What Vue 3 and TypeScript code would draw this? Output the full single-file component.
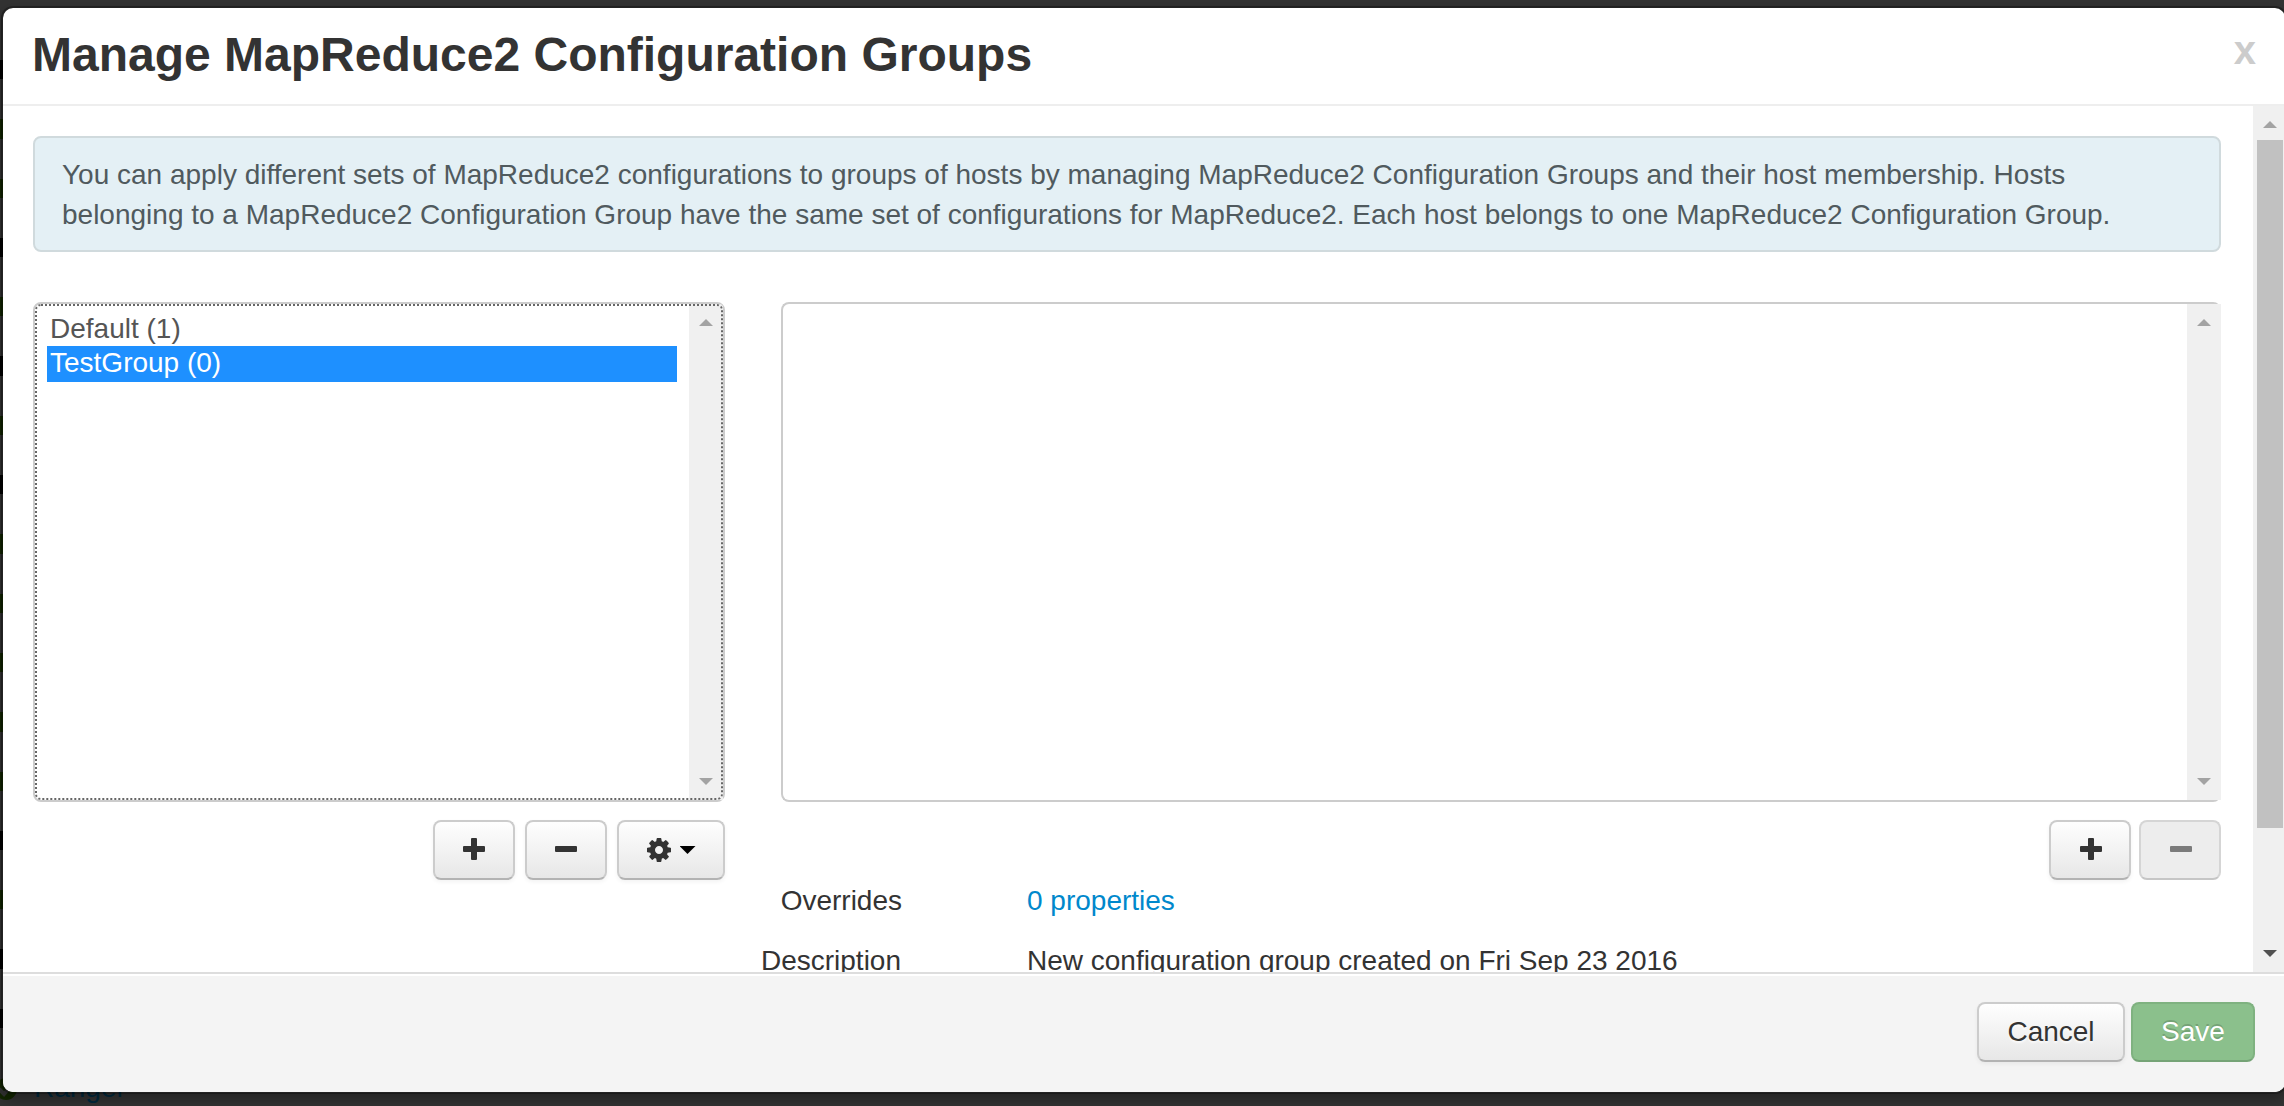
<script setup lang="ts">
import { ref } from 'vue'

interface ConfigGroup {
  name: string
  hosts: number
}

const service = 'MapReduce2'
const groups: ConfigGroup[] = [
  { name: 'Default', hosts: 1 },
  { name: 'TestGroup', hosts: 0 },
]
const selected = ref('TestGroup')

// Service statuses of the page behind the dialog, one per 60px row
const statuses: string[] = [
  'client', 'ok', 'ok', 'client', 'ok', 'client', 'ok', 'client', 'ok',
  'ok', 'ok', 'ok', 'ok', 'client', 'ok', 'client', 'client',
]
</script>

<template>
  <div class="screen">
    <div class="page">
      <div class="edge">
        <i v-for="(s, n) in statuses" :key="n" :class="s"></i>
      </div>
      <div class="entry">
        <span class="status">
          <svg width="22" height="22" viewBox="0 0 22 22">
            <circle cx="11" cy="11" r="11" fill="#122600" />
            <path d="M4 11l5 5 9-10" fill="none" stroke="#333" stroke-width="4" />
          </svg>
        </span>
        <span class="service">Ranger</span>
      </div>
    </div>

    <div class="modal">
      <header class="head">
        <h3>Manage {{ service }} Configuration Groups</h3>
        <span class="close">x</span>
      </header>

      <div class="body">
        <div class="content">
          <div class="alert">
            You can apply different sets of {{ service }} configurations to groups of hosts by managing {{ service }} Configuration Groups and their host membership. Hosts<br />
            belonging to a {{ service }} Configuration Group have the same set of configurations for {{ service }}. Each host belongs to one {{ service }} Configuration Group.
          </div>

          <div class="columns">
            <section class="left">
              <div class="list focused">
                <div class="options">
                  <div
                    v-for="g in groups"
                    :key="g.name"
                    class="option"
                    :class="{ active: g.name === selected }"
                    @click="selected = g.name"
                  >{{ g.name }} ({{ g.hosts }})</div>
                </div>
                <div class="bar">
                  <i class="up"></i>
                  <i class="down"></i>
                </div>
              </div>
              <div class="actions">
                <button class="btn icon">
                  <svg width="22" height="22"><path d="M9 0h4q1 0 1 1v7h7q1 0 1 1v4q0 1-1 1h-7v7q0 1-1 1h-4q-1 0-1-1v-7h-7q-1 0-1-1v-4q0-1 1-1h7v-7q0-1 1-1z" fill="#333" /></svg>
                </button>
                <button class="btn icon">
                  <svg width="22" height="22"><rect y="8" width="22" height="6" rx="1" fill="#333" /></svg>
                </button>
                <button class="btn gear">
                  <svg width="24" height="24" viewBox="128 128 1536 1536"><path fill="#333" d="M1152 896q0-106-75-181t-181-75-181 75-75 181 75 181 181 75 181-75 75-181zm512-109v222q0 12-8 23t-20 13l-185 28q-19 54-39 91 35 50 107 138 10 12 10 25t-9 23q-27 37-99 108t-94 71q-12 0-26-9l-138-108q-44 23-91 38-16 136-29 186-7 28-36 28h-222q-14 0-24.500-8.500t-11.500-21.500l-28-184q-49-16-90-37l-141 107q-10 9-25 9-14 0-25-11-126-114-165-168-7-10-7-23 0-12 8-23 15-21 51-66.500t54-70.500q-27-50-41-99l-183-27q-13-2-21-12.500t-8-23.500v-222q0-12 8-23t19-13l186-28q14-46 39-92-40-57-107-138-10-12-10-24 0-10 9-23 26-36 98.500-107.500t94.500-71.500q13 0 26 10l138 107q44-23 91-38 16-136 29-186 7-28 36-28h222q14 0 24.500 8.500t11.500 21.500l28 184q49 16 90 37l142-107q9-9 24-9 13 0 25 10 129 119 165 170 7 8 7 22 0 12-8 23-15 21-51 66.500t-54 70.500q26 50 41 98l183 28q13 2 21 12.500t8 23.500z" /></svg>
                  <i class="caret"></i>
                </button>
              </div>
            </section>

            <section class="right">
              <div class="list hosts">
                <div class="options"></div>
                <div class="bar">
                  <i class="up"></i>
                  <i class="down"></i>
                </div>
              </div>
              <div class="actions tight">
                <button class="btn icon">
                  <svg width="22" height="22"><path d="M9 0h4q1 0 1 1v7h7q1 0 1 1v4q0 1-1 1h-7v7q0 1-1 1h-4q-1 0-1-1v-7h-7q-1 0-1-1v-4q0-1 1-1h7v-7q0-1 1-1z" fill="#333" /></svg>
                </button>
                <button class="btn icon disabled" disabled>
                  <svg width="22" height="22"><rect y="8" width="22" height="6" rx="1" fill="#7b7b7b" /></svg>
                </button>
              </div>
              <dl class="details">
                <div class="row">
                  <dt class="first">Overrides</dt>
                  <dd><a>0 properties</a></dd>
                </div>
                <div class="row">
                  <dt>Description</dt>
                  <dd>New configuration group created on Fri Sep 23 2016</dd>
                </div>
              </dl>
            </section>
          </div>
        </div>

        <div class="scroll">
          <i class="up"></i>
          <div class="thumb"></div>
          <i class="down dark"></i>
        </div>
      </div>

      <footer class="foot">
        <button class="btn cancel">Cancel</button>
        <button class="btn save" disabled>Save</button>
      </footer>
    </div>
  </div>
</template>

<style>
body {
  margin: 0;
  background: #333;
}
</style>

<style scoped>
* {
  box-sizing: border-box;
}
.screen {
  position: relative;
  width: 2284px;
  height: 1106px;
  overflow: hidden;
  background: #333;
  padding: 6px 0 0 1px;
  font-family: 'Liberation Sans', Arial, sans-serif;
  font-size: 28px;
  line-height: 40px;
  color: #333;
}
.page {
  position: absolute;
  left: 0;
  top: 0;
}
.edge {
  display: flex;
  flex-direction: column;
  width: 3px;
  height: 1068px;
  padding-top: 60px;
}
.edge i {
  height: 20px;
  margin-bottom: 40px;
}
.edge .client {
  background: #000;
}
.edge .ok {
  background: #122600;
}
.entry {
  display: flex;
  margin-left: -5px;
}
.status {
  width: 39px;
  padding-top: 10px;
  line-height: 0;
}
.service {
  color: #00293d;
}
.modal {
  position: relative;
  display: flex;
  flex-direction: column;
  width: 2286px;
  height: 1088px;
  background: #fff;
  background-clip: padding-box;
  border: 2px solid rgba(0, 0, 0, 0.3);
  border-radius: 12px;
  box-shadow: 0 6px 14px rgba(0, 0, 0, 0.3);
  overflow: hidden;
}
.head {
  flex: none;
  display: flex;
  justify-content: space-between;
  height: 98px;
  padding: 17px 29px 0 29px;
  border-bottom: 2px solid #eee;
}
h3 {
  margin: 0;
  font-size: 48px;
  line-height: 60px;
  font-weight: bold;
  white-space: nowrap;
}
.close {
  margin-top: 5px;
  font-size: 40px;
  line-height: 40px;
  font-weight: bold;
  color: #ccc;
}
.body {
  flex: none;
  display: flex;
  height: 866px;
  overflow: hidden;
}
.content {
  width: 2250px;
  padding: 30px 32px 0 30px;
}
.alert {
  height: 116px;
  padding: 17px 27px;
  border: 2px solid #d0dadd;
  border-radius: 8px;
  background: #e4f0f5;
  color: #505a5e;
  white-space: nowrap;
}
.columns {
  display: flex;
  gap: 56px;
  margin-top: 50px;
}
.left {
  width: 692px;
}
.right {
  width: 1440px;
}
.list {
  display: flex;
  height: 500px;
  border: 2px solid #ccc;
  border-radius: 8px;
  color: #555;
}
.focused {
  outline: 2px dotted #666;
  outline-offset: -4px;
}
.focused .bar {
  border-top-right-radius: 4px;
}
.hosts {
  border-right: 0;
}
.options {
  flex: 1;
  padding: 8px 12px;
}
.option {
  height: 34px;
  line-height: 33px;
  padding-left: 3px;
}
.option.active {
  height: 36px;
  background: #1e90ff;
  color: #fff;
}
.bar {
  display: flex;
  flex-direction: column;
  justify-content: space-between;
  align-items: center;
  width: 34px;
  padding: 15px 0;
  background: #f0f0f0;
}
.up,
.down {
  width: 14px;
  height: 7px;
  background: #a3a3a3;
}
.up {
  clip-path: polygon(50% 0, 100% 100%, 0 100%);
}
.down {
  clip-path: polygon(0 0, 100% 0, 50% 100%);
}
.dark {
  background: #505050;
}
.actions {
  display: flex;
  justify-content: flex-end;
  gap: 10px;
  margin-top: 18px;
}
.tight {
  gap: 8px;
}
.btn {
  display: flex;
  align-items: center;
  justify-content: center;
  height: 60px;
  padding: 0;
  border: 2px solid #ccc;
  border-bottom-color: #b3b3b3;
  border-radius: 8px;
  background: linear-gradient(#fff, #e6e6e6) border-box;
  box-shadow: 0 2px 4px rgba(0, 0, 0, 0.05);
  font: inherit;
  color: #333;
  text-shadow: 0 2px 2px rgba(255, 255, 255, 0.75);
}
.icon {
  width: 82px;
}
.icon svg {
  margin-top: -2px;
}
.tight .icon {
  padding-left: 2px;
}
.btn.disabled {
  background: #ededed;
  border-color: #d5d5d5;
  border-bottom-color: #c6c6c6;
  box-shadow: none;
}
.gear {
  width: 108px;
  gap: 9px;
}
.caret {
  width: 16px;
  height: 8px;
  background: #000;
  clip-path: polygon(0 0, 100% 0, 50% 100%);
}
.details {
  margin: 0;
  padding-top: 1px;
}
.row {
  display: flex;
  height: 40px;
  margin-bottom: 20px;
}
dt {
  display: flex;
  justify-content: flex-end;
  width: 140px;
  margin-left: -20px;
}
dt.first {
  width: 141px;
  margin-right: -1px;
}
dd {
  margin: 0 0 0 126px;
}
dd a {
  color: #0088cc;
}
.scroll {
  display: flex;
  flex-direction: column;
  align-items: center;
  flex: none;
  width: 32px;
  padding: 15px 1px 15px 3px;
  background: #f0f0f0;
}
.thumb {
  width: 26px;
  height: 688px;
  margin: 12px 0 auto;
  background: #c1c1c1;
}
.foot {
  flex: 1;
  display: flex;
  justify-content: flex-end;
  gap: 6px;
  padding: 28px 30px 0;
  background: #f4f4f4;
  border-top: 2px solid #ddd;
  box-shadow: inset 0 2px 0 #fff;
}
.cancel {
  width: 148px;
}
.btn.save {
  width: 124px;
  border-color: #7fb280;
  border-bottom-color: #75a376;
  background: #8bc08c;
  box-shadow: none;
  color: #fff;
  text-shadow: 0 -2px 0 rgba(0, 0, 0, 0.16);
}
</style>
